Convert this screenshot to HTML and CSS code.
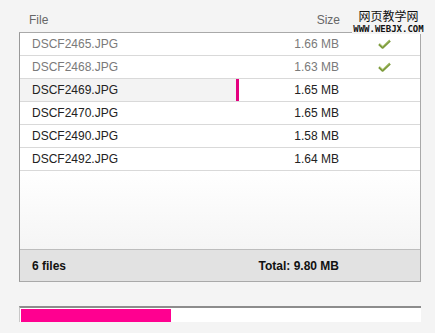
FILE: index.html
```html
<!DOCTYPE html>
<html lang="en">
<head>
  <meta charset="UTF-8">
  <title>Upload queue</title>
  <link rel="stylesheet" href="styles.css">
</head>
<body>
  <div class="watermark">
    <div class="wm-title">网页教学网</div>
    <div class="wm-url">WWW.WEBJX.COM</div>
  </div>

  <div class="uploader">
    <div class="head">
      <span class="col-name">File</span>
      <span class="col-size">Size</span>
      <span class="col-status"></span>
    </div>

    <div class="list">
      <div class="row done">
        <span class="col-name">DSCF2465.JPG</span>
        <span class="col-size">1.66 MB</span>
        <span class="col-status"><svg class="check" width="13" height="10" viewBox="0 0 13 10"><path d="M1 5.2 L4.6 8.6 L12 1.6" fill="none" stroke="#7d9b3c" stroke-width="2.4" stroke-linejoin="round"/><path d="M2 5 L4.6 7.4 L11.4 1.2" fill="none" stroke="#c4d88e" stroke-width="0.8"/></svg></span>
      </div>
      <div class="row done">
        <span class="col-name">DSCF2468.JPG</span>
        <span class="col-size">1.63 MB</span>
        <span class="col-status"><svg class="check" width="13" height="10" viewBox="0 0 13 10"><path d="M1 5.2 L4.6 8.6 L12 1.6" fill="none" stroke="#7d9b3c" stroke-width="2.4" stroke-linejoin="round"/><path d="M2 5 L4.6 7.4 L11.4 1.2" fill="none" stroke="#c4d88e" stroke-width="0.8"/></svg></span>
      </div>
      <div class="row uploading" style="background: linear-gradient(to right, #f3f3f3 0 216px, #e4007f 216px 219px, #ffffff 219px);">
        <span class="col-name">DSCF2469.JPG</span>
        <span class="col-size">1.65 MB</span>
        <span class="col-status"></span>
      </div>
      <div class="row">
        <span class="col-name">DSCF2470.JPG</span>
        <span class="col-size">1.65 MB</span>
        <span class="col-status"></span>
      </div>
      <div class="row">
        <span class="col-name">DSCF2490.JPG</span>
        <span class="col-size">1.58 MB</span>
        <span class="col-status"></span>
      </div>
      <div class="row">
        <span class="col-name">DSCF2492.JPG</span>
        <span class="col-size">1.64 MB</span>
        <span class="col-status"></span>
      </div>
      <div class="empty"></div>
      <div class="summary">
        <span class="col-name">6 files</span>
        <span class="col-size">Total: 9.80 MB</span>
        <span class="col-status"></span>
      </div>
    </div>

    <div class="progress">
      <div class="progress-fill" style="width: 150px;"></div>
    </div>
  </div>
</body>
</html>
```

FILE: styles.css
```css
body {
  margin: 0;
  background-color: #f4f4f4;
  font-family: "Liberation Sans", Arial, sans-serif;
  font-size: 12px;
  color: #222222;
}

.uploader {
  width: 402px;
  padding: 13px 0 0 19px;
}

.head {
  display: flex;
  height: 19px;
  line-height: 15px;
  color: #666666;
}

.head .col-name {
  padding-left: 10px;
}

.col-name {
  flex: 1;
  padding-left: 12px;
}

.col-size {
  width: 110px;
  text-align: right;
}

.col-status {
  width: 81px;
  display: flex;
  justify-content: center;
  padding-left: 10px;
  box-sizing: border-box;
}

.list {
  border: 1px solid #a9a9a9;
  border-left-color: #999999;
  background-color: #ffffff;
}

.row {
  display: flex;
  align-items: center;
  height: 22px;
  border-bottom: 1px solid #d9d9d9;
}

.row.done {
  color: #7a7a7a;
}

.check {
  display: block;
}

.empty {
  height: 78px;
  background-image: linear-gradient(to bottom, #ffffff, #f5f5f5);
}

.summary {
  display: flex;
  align-items: center;
  height: 31px;
  border-top: 1px solid #bdbdbd;
  background-color: #e2e2e2;
  font-weight: bold;
  color: #111111;
}

.progress {
  margin-top: 24px;
  height: 14px;
  border-top: 2px solid #8c8c8c;
  border-left: 1px solid #c8c8c8;
  background-color: #ffffff;
  display: flex;
}

.progress-fill {
  background-color: #ff0090;
  margin-top: 1px;
  margin-left: 1px;
}

.watermark {
  position: absolute;
  top: 8px;
  right: 10px;
  width: 73px;
  text-align: center;
  background-color: #f4f4f4;
}

.wm-title {
  font-family: "Noto Sans CJK SC", sans-serif;
  font-size: 12px;
  line-height: 15px;
  color: #111111;
  margin-bottom: 2px;
}

.wm-url {
  font-family: "DejaVu Sans Mono", monospace;
  font-weight: bold;
  font-size: 9px;
  line-height: 9px;
  color: #111111;
}
```
